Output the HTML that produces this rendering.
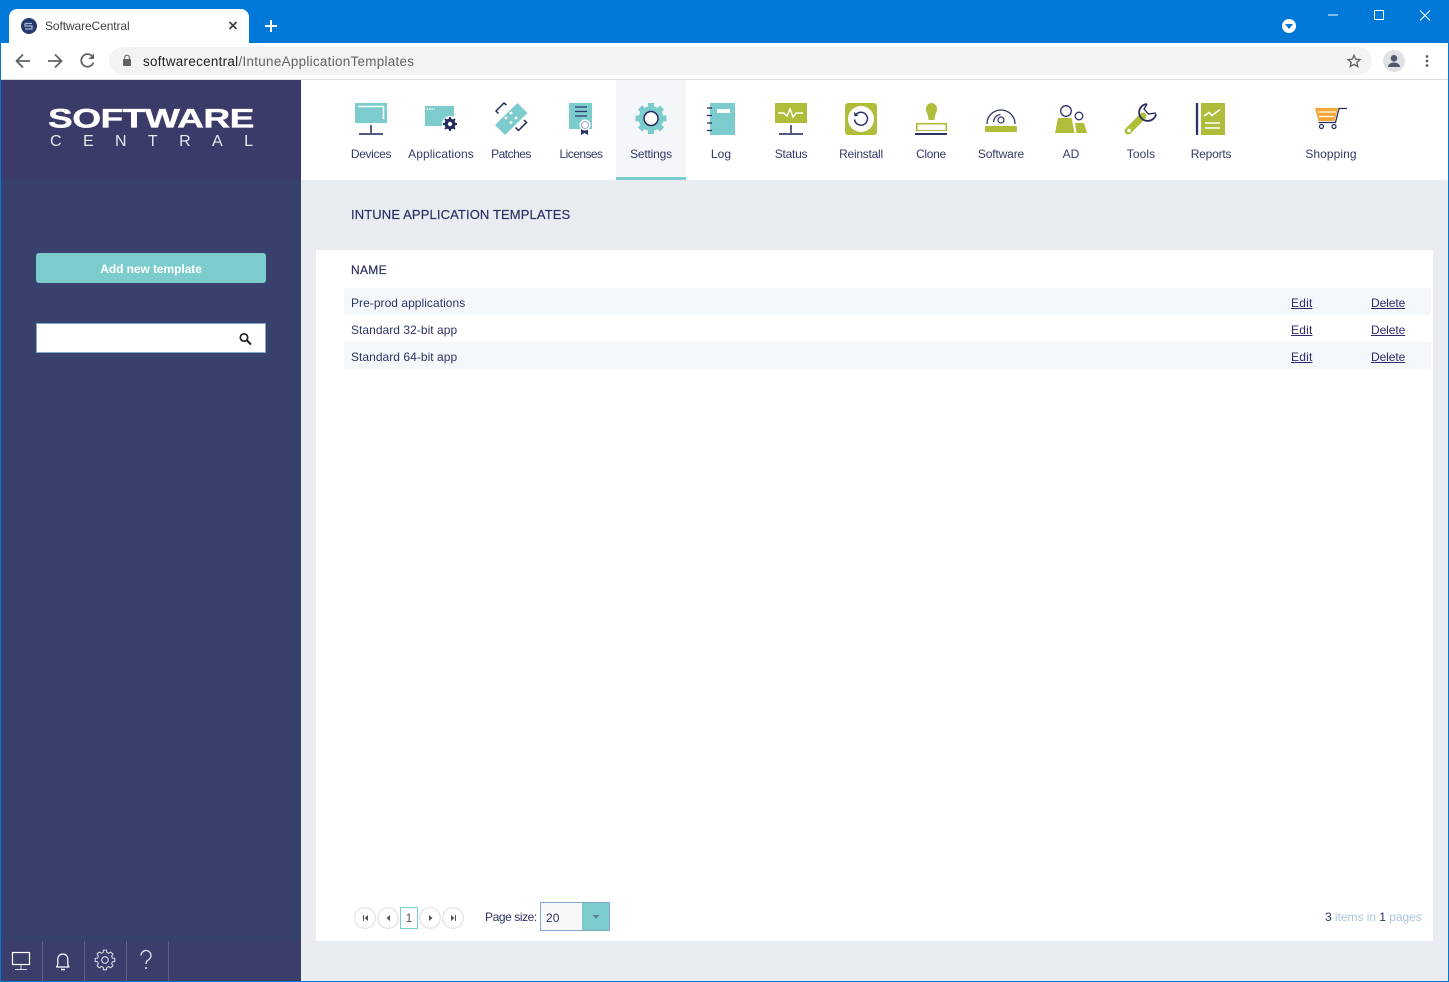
<!DOCTYPE html>
<html><head><meta charset="utf-8"><title>SoftwareCentral</title>
<style>
html,body{margin:0;padding:0;width:1449px;height:982px;overflow:hidden;background:#e9edf1;font-family:"Liberation Sans",sans-serif;color:#2d3363}
.a{position:absolute;white-space:nowrap}
.n{position:absolute;top:147px;width:90px;text-align:center;font-size:12px;line-height:14px;letter-spacing:.08px;color:#333a68}
.t{font-size:12px;line-height:14px;letter-spacing:.04px;color:#2d3363}
a{color:#2d2a6e;text-decoration:underline}
svg{position:absolute;left:0;top:0}
</style></head><body>
<div class="a" style="left:0;top:0;width:1449px;height:43px;background:#0078d7"></div>
<div class="a" style="left:9px;top:9px;width:240px;height:34px;background:#fff;border-radius:8px 8px 0 0"></div>
<div class="a" style="left:45px;top:19px;font-size:12px;line-height:15px;color:#3c4043;letter-spacing:-.1px">SoftwareCentral</div>
<div class="a" style="left:1px;top:43px;width:1447px;height:36px;background:#fff"></div>
<div class="a" style="left:1px;top:79px;width:1447px;height:1px;background:#dadce0"></div>
<div class="a" style="left:109px;top:47px;width:1263px;height:28px;border-radius:14px;background:#f1f3f4"></div>
<div class="a" style="left:143px;top:54px;font-size:13.4px;line-height:16px;color:#202124;letter-spacing:.31px">softwarecentral<span style="color:#5f6368">/IntuneApplicationTemplates</span></div>

<div class="a" style="left:301px;top:80px;width:1147px;height:100px;background:#fff"></div>
<div class="a" style="left:616px;top:80px;width:70px;height:97px;background:#f5f6fa"></div>
<div class="a" style="left:616px;top:177px;width:70px;height:3px;background:#7ccccd"></div>

<div class="a" style="left:1px;top:80px;width:300px;height:901px;background:#38416c"></div>
<div class="a" style="left:1px;top:80px;width:300px;height:100px;background:#3b3b69"></div>
<div class="a" style="left:1px;top:941px;width:300px;height:40px;background:#3b3e6a"></div>
<div class="a" style="left:48px;top:104px;font-size:30px;line-height:34px;font-weight:bold;color:#fff;transform-origin:0 0;transform:scale(1.24,.9);letter-spacing:-.5px;-webkit-text-stroke:.4px #fff">SOFTWARE</div>
<div class="a" style="left:50px;top:133px;width:203px;font-size:16px;line-height:18px;color:#e6e8f0;display:flex;justify-content:space-between"><span>C</span><span>E</span><span>N</span><span>T</span><span>R</span><span>A</span><span>L</span></div>

<div class="a" style="left:36px;top:253px;width:230px;height:30px;background:#7ccccd;border-radius:3px;color:#fff;font-weight:bold;font-size:12px;letter-spacing:-.08px;line-height:32px;text-align:center">Add new template</div>
<div class="a" style="left:36px;top:323px;width:228px;height:28px;background:#fff;border:1px solid #82a8d0"></div>

<div class="n" style="left:326px;letter-spacing:-.35px">Devices</div>
<div class="n" style="left:396px">Applications</div>
<div class="n" style="left:466px;letter-spacing:-.5px">Patches</div>
<div class="n" style="left:536px;letter-spacing:-.55px">Licenses</div>
<div class="n" style="left:606px;letter-spacing:-.2px">Settings</div>
<div class="n" style="left:676px">Log</div>
<div class="n" style="left:746px;letter-spacing:-.25px">Status</div>
<div class="n" style="left:816px;letter-spacing:-.25px">Reinstall</div>
<div class="n" style="left:886px;letter-spacing:-.3px">Clone</div>
<div class="n" style="left:956px;letter-spacing:-.15px">Software</div>
<div class="n" style="left:1026px">AD</div>
<div class="n" style="left:1096px">Tools</div>
<div class="n" style="left:1166px;letter-spacing:-.2px">Reports</div>
<div class="n" style="left:1286px">Shopping</div>

<div class="a" style="left:351px;top:206px;font-size:13px;line-height:17px;letter-spacing:.12px;color:#2d3363;-webkit-text-stroke:.2px #2d3363">INTUNE APPLICATION TEMPLATES</div>
<div class="a" style="left:316px;top:250px;width:1117px;height:691px;background:#fff"></div>
<div class="a" style="left:351px;top:263px;font-size:12px;line-height:15px;letter-spacing:.3px;color:#2d2f63;-webkit-text-stroke:.2px #2d2f63">NAME</div>
<div class="a" style="left:344px;top:288px;width:1087px;height:27px;background:#f5f8fb"></div>
<div class="a" style="left:344px;top:342px;width:1087px;height:27px;background:#f5f8fb"></div>
<div class="a t" style="left:351px;top:296px">Pre-prod applications</div>
<div class="a t" style="left:351px;top:323px">Standard 32-bit app</div>
<div class="a t" style="left:351px;top:350px">Standard 64-bit app</div>
<a class="a t" style="left:1291px;top:296px;color:#2d2a6e;text-decoration:underline;letter-spacing:.2px">Edit</a>
<a class="a t" style="left:1291px;top:323px;color:#2d2a6e;text-decoration:underline;letter-spacing:.2px">Edit</a>
<a class="a t" style="left:1291px;top:350px;color:#2d2a6e;text-decoration:underline;letter-spacing:.2px">Edit</a>
<a class="a t" style="left:1371px;top:296px;color:#2d2a6e;text-decoration:underline;letter-spacing:-.08px">Delete</a>
<a class="a t" style="left:1371px;top:323px;color:#2d2a6e;text-decoration:underline;letter-spacing:-.08px">Delete</a>
<a class="a t" style="left:1371px;top:350px;color:#2d2a6e;text-decoration:underline;letter-spacing:-.08px">Delete</a>

<div class="a" style="left:400px;top:907px;width:16px;height:20px;border:1px solid #7ccccd;font-size:12px;line-height:21px;text-align:center;color:#555">1</div>
<div class="a t" style="left:485px;top:910px;letter-spacing:-.42px">Page size:</div>
<div class="a" style="left:540px;top:902px;width:68px;height:27px;border:1px solid #82a8d0;background:#f8f8f8"></div>
<div class="a" style="left:582px;top:903px;width:27px;height:27px;background:#7ccccd"></div>
<div class="a t" style="left:546px;top:911px">20</div>
<div class="a" style="left:1325px;top:910px;font-size:12px;line-height:14px;letter-spacing:-.04px;color:#a9c3dc"><span style="color:#2d3363">3</span> items in <span style="color:#2d3363">1</span> pages</div>

<svg width="1449" height="982" viewBox="0 0 1449 982" fill="none">
<!-- frame -->
<rect x=".5" y=".5" width="1448" height="981" stroke="#0078d7"/>
<!-- favicon -->
<circle cx="29" cy="26" r="8" fill="#24396c"/>
<path d="M25 23.500h7M25 23.500v2.500h7v3h-7" stroke="#a8b6cf" stroke-width="1.300"/>
<!-- tab close, plus -->
<path d="M229.500 22l7 7M236.500 22l-7 7" stroke="#3c4043" stroke-width="1.700"/>
<path d="M271 20v12M265 26h12" stroke="#fff" stroke-width="2"/>
<!-- window controls -->
<circle cx="1289" cy="26" r="7" fill="#fff"/>
<path d="M1285 24h8l-4 5z" fill="#0078d7"/>
<path d="M1328 15h10" stroke="#fff"/>
<rect x="1374.500" y="10.500" width="9" height="9" stroke="#fff"/>
<path d="M1420 10.500l10 10M1430 10.500l-10 10" stroke="#fff"/>
<!-- nav -->
<path d="M30 61H17M23 54.500l-6.500 6.500 6.500 6.500" stroke="#5f6368" stroke-width="1.800"/>
<path d="M48 61h13M55 54.500l6.500 6.500-6.500 6.500" stroke="#5f6368" stroke-width="1.800"/>
<path d="M92.500 56.500A6.300 6.300 0 1 0 93.500 62.500" stroke="#5f6368" stroke-width="1.800"/>
<path d="M94 53.500v5.500H88.500z" fill="#5f6368"/>
<rect x="123" y="59" width="8" height="7" rx="1" fill="#5f6368"/>
<path d="M124.700 59v-1.500a2.300 2.300 0 0 1 4.600 0V59" stroke="#5f6368" stroke-width="1.100"/>
<path d="M1354 55.300l1.700 3.900 4.300.4-3.200 2.800 1 4.200-3.800-2.200-3.800 2.200 1-4.200-3.200-2.800 4.300-.4z" stroke="#5f6368" stroke-width="1.300"/>
<circle cx="1394" cy="61" r="11" fill="#dfe1e5"/>
<circle cx="1394" cy="58.300" r="3.300" fill="#4f5a6f"/>
<path d="M1388 67c0-6 12-6 12 0z" fill="#4f5a6f"/>
<g fill="#5f6368"><circle cx="1427" cy="56.500" r="1.400"/><circle cx="1427" cy="61" r="1.400"/><circle cx="1427" cy="65.500" r="1.400"/></g>

<!-- search -->
<circle cx="244" cy="337.500" r="3.700" stroke="#222" stroke-width="1.700"/>
<path d="M247 340.500l4 4" stroke="#222" stroke-width="2"/>

<!-- Devices -->
<rect x="355" y="103" width="32" height="20" fill="#7ccccd"/>
<path d="M358 106.500h25.500V119" stroke="#fff" stroke-width="1.500"/>
<path d="M371 125v8M359 134h24" stroke="#3b4270" stroke-width="1.700"/>
<!-- Applications -->
<rect x="425" y="106" width="29" height="20" fill="#7ccccd"/>
<path d="M426.500 109h8" stroke="#fff" stroke-width="1.400" stroke-dasharray="1.500 1"/>
<circle cx="450" cy="124" r="8" fill="#fff"/>
<circle cx="450" cy="124" r="4" stroke="#262b5f" stroke-width="3"/>
<path d="M450 117v14M443 124h14M445 119l10 10M455 119l-10 10" stroke="#262b5f" stroke-width="2"/>
<circle cx="450" cy="124" r="2.200" fill="#fff"/>
<!-- Patches -->
<path d="M517.500 103l10 10-22.500 22-10-10z" fill="#7ccccd"/>
<g fill="#fff"><circle cx="511" cy="113" r="1.400"/><circle cx="506" cy="118" r="1.400"/><circle cx="516" cy="118" r="1.400"/><circle cx="511" cy="122.500" r="1.400"/></g>
<path d="M506.500 105l-2.500-2-8 8 2.500 2.500M515.500 127.500l3 3 8-8-2.500-2.500" stroke="#262b5f" stroke-width="1.500"/>
<!-- Licenses -->
<rect x="569" y="103" width="23" height="26" fill="#7ccccd"/>
<path d="M575 107h12M575 111.500h12M575 116h12" stroke="#2c3268" stroke-width="1.300"/>
<path d="M581 128v7l3.500-2 3.500 2v-7z" fill="#2c3268"/>
<circle cx="585" cy="125" r="5.500" fill="#fff"/>
<circle cx="585" cy="125" r="3.500" fill="#fff" stroke="#8c92b5" stroke-width=".8"/>
<!-- Settings -->
<circle cx="651" cy="118.500" r="12.500" fill="#7ccccd"/>
<path d="M651 103v31M635.500 118.500h31M640 107.500l22 22M662 107.500l-22 22" stroke="#7ccccd" stroke-width="6"/>
<circle cx="651" cy="118.500" r="7" fill="#fff" stroke="#262b5f" stroke-width="1.500"/>
<!-- Log -->
<rect x="710" y="103" width="25" height="32" fill="#7ccccd"/>
<rect x="717" y="109" width="13" height="4" fill="#fff"/>
<path d="M707 108h5M707 115.500h5M707 123h5M707 130.500h5" stroke="#262b5f" stroke-width="1.300"/>
<!-- Status -->
<rect x="775" y="103" width="32" height="20" fill="#afbd3a"/>
<path d="M778 113h6l3 3 3-7 3 8 3-4h7" stroke="#fff" stroke-width="1.500"/>
<path d="M791 125v8M779 134h24" stroke="#3b4270" stroke-width="1.700"/>
<!-- Reinstall -->
<rect x="845" y="103" width="32" height="32" rx="3" fill="#afbd3a"/>
<circle cx="861" cy="119" r="13" fill="#fff"/>
<path d="M856 114.500a6.500 6.500 0 1 1-1.500 5" stroke="#2c3268" stroke-width="1.500"/>
<path d="M854 112l.5 4.500 4-1z" fill="#2c3268"/>
<!-- Clone -->
<path d="M926 109a5.500 6 0 0 1 11 0c0 4-2.500 5-2.500 11h-6c0-6-2.500-7-2.500-11z" fill="#afbd3a"/>
<path d="M916.800 131v-7.300h29.500V131" stroke="#afbd3a" stroke-width="1.700"/>
<path d="M916 130.500h31" stroke="#afbd3a" stroke-width="1"/>
<path d="M915 134h32" stroke="#2c3268" stroke-width="2"/>
<!-- Software -->
<path d="M987 124a14 14 0 0 1 28 0" stroke="#2c3268" stroke-width="1.300"/>
<path d="M993.500 122a8 8 0 0 1 7-7.500" stroke="#2c3268" stroke-width="1.300"/>
<circle cx="1001" cy="120" r="3" stroke="#2c3268" stroke-width="1.200"/>
<rect x="985" y="126" width="32" height="6" rx="1" fill="#afbd3a"/>
<!-- AD -->
<circle cx="1066" cy="111" r="5.300" stroke="#2c3268" stroke-width="1.300"/>
<circle cx="1079" cy="116" r="3.800" stroke="#2c3268" stroke-width="1.300"/>
<path d="M1058 118h13.500l3 15h-19.500z" fill="#afbd3a"/>
<path d="M1075 123h9l3 10h-10.500z" fill="#afbd3a"/>
<!-- Tools -->
<path d="M1143 116l-15 15" stroke="#afbd3a" stroke-width="7" stroke-linecap="round"/>
<circle cx="1129" cy="130.500" r="1.800" fill="#fff"/>
<path d="M1147 104a8.500 8.500 0 1 0 9 10" stroke="#262b5f" stroke-width="1.800"/>
<path d="M1147 104l-3 5 4.500 5 7.500-1" stroke="#262b5f" stroke-width="1.300"/>
<!-- Reports -->
<path d="M1197 103v32" stroke="#2c3268" stroke-width="2.300"/>
<rect x="1201" y="103" width="24" height="32" fill="#afbd3a"/>
<path d="M1204 116l5-3.500 3 3 8-6" stroke="#fff" stroke-width="1.500"/>
<path d="M1205 123h15M1205 128h15" stroke="#fff" stroke-width="1.500"/>
<!-- Shopping -->
<path d="M1315 108h23l-3.500 13h-16z" fill="#f7a535"/>
<path d="M1318 112h18M1319 116.500h15" stroke="#fff" stroke-width="1.200"/>
<path d="M1347 108.500h-8l-3.500 14h-17" stroke="#262b5f" stroke-width="1.300"/>
<circle cx="1321.500" cy="126.500" r="2" stroke="#262b5f" stroke-width="1.200"/>
<circle cx="1334" cy="126.500" r="2" stroke="#262b5f" stroke-width="1.200"/>

<!-- sidebar bottom -->
<path d="M42.500 941v40M84.500 941v40M126.500 941v40M168.500 941v40" stroke="#566190"/>
<rect x="12.500" y="952.500" width="17" height="12" stroke="#fff" stroke-width="1.200"/>
<path d="M21 965v4.500M15 969.500h12" stroke="#d8dce8"/>
<path d="M56.500 967c2-1 1.500-4 1.500-8a5 5 0 0 1 10 0c0 4-.5 7 1.500 8z" transform="translate(-.2 0)" stroke="#fff" stroke-width="1.200"/>
<path d="M61 969.500h4" stroke="#fff" stroke-width="1.500"/>
<circle cx="105" cy="960" r="3.300" stroke="#d8dce8" stroke-width="1.100"/>
<g transform="translate(105 960) scale(.88) translate(-105 -960)">
<path d="M103.300 950.500h3.400l.5 2.700 2 .9 2.400-1.500 2.400 2.400-1.500 2.400.9 2 2.700.5v3.400l-2.700.5-.9 2 1.500 2.400-2.400 2.400-2.400-1.500-2 .9-.5 2.700h-3.400l-.5-2.700-2-.9-2.400 1.500-2.400-2.400 1.500-2.400-.9-2-2.700-.5v-3.400l2.700-.5.9-2-1.500-2.400 2.400-2.400 2.400 1.500 2-.9z" transform="translate(0 -1.700)" stroke="#d8dce8" stroke-width="1.200"/>
</g>
<path d="M141 955.500a5 5 0 1 1 7.500 4.300c-1.700 1-2.500 2-2.500 4.200" stroke="#e6e8f0" stroke-width="1.300"/>
<circle cx="146" cy="968" r="1" fill="#e6e8f0"/>

<!-- pager -->
<g stroke="#e2e2e2" stroke-width="1.200" fill="#fff">
<circle cx="365" cy="918" r="10.300"/><circle cx="388" cy="918" r="10.300"/><circle cx="430" cy="918" r="10.300"/><circle cx="453" cy="918" r="10.300"/>
</g>
<g fill="#555">
<path d="M363 915h1v6h-1zM368 915v6l-3.500-3z"/>
<path d="M390 915v6l-3.500-3z"/>
<path d="M429 915v6l3.500-3z"/>
<path d="M451 915v6l3.500-3zM455 915h1v6h-1z"/>
</g>
<path d="M592.500 915h7l-3.500 3.500z" fill="#5f7f85"/>
</svg>
</body></html>
